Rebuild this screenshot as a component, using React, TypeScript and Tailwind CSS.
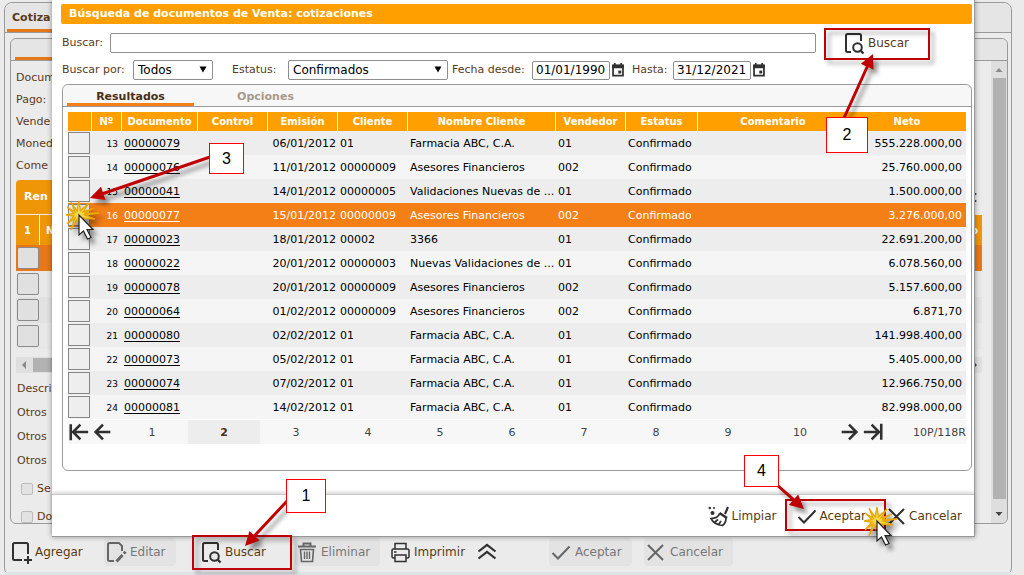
import type { ReactNode } from 'react'

type Row = {
  n: number
  doc: string
  date: string
  client: string
  name: string
  seller: string
  net: string
}

const rows: Row[] = [
  { n: 13, doc: '00000079', date: '06/01/2012', client: '01', name: 'Farmacia ABC, C.A.', seller: '01', net: '555.228.000,00' },
  { n: 14, doc: '00000076', date: '11/01/2012', client: '00000009', name: 'Asesores Financieros', seller: '002', net: '25.760.000,00' },
  { n: 15, doc: '00000041', date: '14/01/2012', client: '00000005', name: 'Validaciones Nuevas de ...', seller: '01', net: '1.500.000,00' },
  { n: 16, doc: '00000077', date: '15/01/2012', client: '00000009', name: 'Asesores Financieros', seller: '002', net: '3.276.000,00' },
  { n: 17, doc: '00000023', date: '18/01/2012', client: '00002', name: '3366', seller: '01', net: '22.691.200,00' },
  { n: 18, doc: '00000022', date: '20/01/2012', client: '00000003', name: 'Nuevas Validaciones de ...', seller: '01', net: '6.078.560,00' },
  { n: 19, doc: '00000078', date: '20/01/2012', client: '00000009', name: 'Asesores Financieros', seller: '002', net: '5.157.600,00' },
  { n: 20, doc: '00000064', date: '01/02/2012', client: '00000009', name: 'Asesores Financieros', seller: '002', net: '6.871,70' },
  { n: 21, doc: '00000080', date: '02/02/2012', client: '01', name: 'Farmacia ABC, C.A.', seller: '01', net: '141.998.400,00' },
  { n: 22, doc: '00000073', date: '05/02/2012', client: '01', name: 'Farmacia ABC, C.A.', seller: '01', net: '5.405.000,00' },
  { n: 23, doc: '00000074', date: '07/02/2012', client: '01', name: 'Farmacia ABC, C.A.', seller: '01', net: '12.966.750,00' },
  { n: 24, doc: '00000081', date: '14/02/2012', client: '01', name: 'Farmacia ABC, C.A.', seller: '01', net: '82.998.000,00' },
]

const SELECTED = 16

const columns = [
  { title: '', width: 'w-[24px]' },
  { title: 'Nº', width: 'w-[30px]' },
  { title: 'Documento', width: 'w-[76px]' },
  { title: 'Control', width: 'w-[70px]' },
  { title: 'Emisión', width: 'w-[70px]' },
  { title: 'Cliente', width: 'w-[70px]' },
  { title: 'Nombre Cliente', width: 'w-[148px]' },
  { title: 'Vendedor', width: 'w-[70px]' },
  { title: 'Estatus', width: 'w-[72px]' },
  { title: 'Comentario', width: 'w-[150px]' },
  { title: 'Neto', width: 'w-auto' },
]

const pages = [1, 2, 3, 4, 5, 6, 7, 8, 9, 10]

/* ---------- icons ---------- */

const Svg = ({ children, className = 'size-6' }: { children: ReactNode; className?: string }) => (
  <svg viewBox="0 0 24 24" className={`shrink-0 ${className}`} fill="none" stroke="currentColor" strokeWidth="2" aria-hidden="true">
    {children}
  </svg>
)

const AddIcon = () => (
  <Svg>
    <path d="M13 20H5.500Q4 20 4 18.500V4.500Q4 3 5.500 3H17.500Q19 3 19 4.500V14M19 16V24M15 20H23" />
  </Svg>
)

const EditIcon = () => (
  <Svg>
    <path d="M10 21H5.500Q4 21 4 19.500V4.500Q4 3 5.500 3H15L18 6V11" />
    <path d="M12.500 21.500L18.500 15" strokeWidth="3" />
    <path d="M19.800 13.500L21.500 11.800" strokeWidth="3" />
  </Svg>
)

const SearchDocIcon = () => (
  <Svg>
    <path d="M9 21H5.500Q4 21 4 19.500V4.500Q4 3 5.500 3H17.500Q19 3 19 4.500V10" />
    <circle cx="15.500" cy="16.500" r="4.300" />
    <path d="M18.500 19.500L21.500 22.500" strokeWidth="2.400" />
  </Svg>
)

const TrashIcon = () => (
  <Svg>
    <path d="M3 6.500H21M8.500 6V3.500H15.500V6" />
    <path d="M5.500 9.500L6.500 21.500H17.500L18.500 9.500Z" strokeWidth="1.600" />
    <path d="M9.500 11.500V19M12 11.500V19M14.500 11.500V19" strokeWidth="1.400" />
  </Svg>
)

const PrinterIcon = () => (
  <Svg>
    <path d="M7 8.500V3.500H18V8.500M7 18H5.500Q4 18 4 16.500V10.500Q4 9 5.500 9H19.500Q21 9 21 10.500V16.500Q21 18 19.500 18H18" strokeWidth="1.500" />
    <path d="M7 15H18V21.500H7ZM6 12H8.500" strokeWidth="1.500" />
  </Svg>
)

const ChevronsUpIcon = () => (
  <Svg>
    <path d="M3.500 11.500L12 5L20.500 11.500M3.500 18.500L12 12L20.500 18.500" strokeWidth="2.200" />
  </Svg>
)

const CheckIcon = () => (
  <Svg>
    <path d="M3.500 13L9 18.500L20.500 6.500" />
  </Svg>
)

const CloseIcon = () => (
  <Svg>
    <path d="M4 5L19 20M19 5L4 20" />
  </Svg>
)

const BroomIcon = () => (
  <Svg>
    <g fill="currentColor" stroke="none">
      <circle cx="1.800" cy="4" r="1.300" />
      <circle cx="6" cy="4" r="1" />
      <circle cx="4.500" cy="9" r="2" />
    </g>
    <path d="M20 3L17 10" strokeWidth="2.200" />
    <path d="M11.500 9L19 14" strokeWidth="2.600" />
    <path d="M11.500 9.500Q10 14.500 3 14.500Q6 20.500 14.500 21.500Q18 19 18 14M7 18L10 15.500M11 20L13 17" strokeWidth="1.700" />
  </Svg>
)

const CalendarIcon = () => (
  <Svg className="size-3.5">
    <path d="M3.500 4H20.500V21.500H3.500Z" strokeWidth="3" />
    <path d="M2 6H22" strokeWidth="6" />
    <path d="M6.500 0V5M17.500 0V5" strokeWidth="3" />
    <path d="M12.500 13H17.500V18H12.500Z" fill="currentColor" stroke="none" />
  </Svg>
)

const StepArrowIcon = () => (
  <Svg className="size-[22px]">
    <path d="M20 12H5M12 4L4 12L12 20" strokeWidth="2.800" />
  </Svg>
)

const EdgeArrowIcon = () => (
  <Svg className="size-[22px]">
    <path d="M3 3.500V21M22 12H6M13.500 4L5.500 12L13.500 20" strokeWidth="2.800" />
  </Svg>
)

/* ---------- background form ---------- */

const ToolButton = ({ icon, label, disabled }: { icon: ReactNode; label: string; disabled?: boolean }) => (
  <button
    type="button"
    disabled={disabled}
    className="flex h-7 items-center gap-0.5 rounded-sm pr-2.5 text-[#303030] disabled:bg-[#e3e3e3] disabled:text-[#666]"
  >
    {icon}
    <span className={disabled ? 'text-[#777]' : 'text-[#5a3a12]'}>{label}</span>
  </button>
)

const QuoteForm = () => (
  <div className="flex flex-col pl-[5px]">
    {['Docum', 'Pago:', 'Vende', 'Moned', 'Come'].map((label) => (
      <div key={label} className="flex h-[22px] items-center">
        {label}
      </div>
    ))}
    <div className="mt-[3px] flex h-[34px] items-center">
      <div className="flex h-full w-3/4 items-center rounded-t-sm bg-[#ee9607] pl-2 font-bold text-white">Ren</div>
      <div className="ml-auto flex flex-col text-[#333]">
        <svg viewBox="0 0 6 14" className="mr-1 h-3.5 w-1.5" aria-hidden="true">
          <path d="M0 1L5 4L0 7ZM0 8L5 11L0 14Z" fill="currentColor" />
        </svg>
      </div>
    </div>
    <div className="mt-px flex h-[30px] items-stretch bg-[#ee9607] text-[10px] font-bold text-white">
      <span className="flex w-6 items-center justify-center border-r border-white">1</span>
      <span className="flex flex-1 items-center pl-1.5">N</span>
      <span className="flex items-center pr-1">o</span>
    </div>
    {[0, 1, 2, 3].map((i) => (
      <div
        key={i}
        className={`flex h-[26px] items-center pl-px ${i === 0 ? 'bg-[#e6781a]' : i === 2 ? 'bg-[#e2e2e2]' : 'bg-[#e8e8e8]'}`}
      >
        <input
          type="checkbox"
          aria-label={`Renglón ${i + 1}`}
          className="size-[22px] appearance-none rounded-xs border border-[#8a8a8a] bg-[#e0e0e0]"
        />
      </div>
    ))}
    <div className="mt-2 flex h-4 items-center bg-[#dfdfdf]">
      <svg viewBox="0 0 17 16" className="h-4 w-[17px]" aria-hidden="true">
        <path d="M10 4V12L6 8Z" fill="#8a8a8a" />
      </svg>
      <span className="h-3.5 w-3/4 bg-[#b2b2b2]" />
      <svg viewBox="0 0 6 8" className="mr-1 ml-auto h-2 w-1.5" aria-hidden="true">
        <path d="M1 0V8L5 4Z" fill="#444" />
      </svg>
    </div>
    <div className="mt-1 flex flex-col pl-px">
      {['Descri', 'Otros', 'Otros', 'Otros'].map((label, i) => (
        <div key={i} className="flex h-6 items-center">
          {label}
        </div>
      ))}
      {['Se', 'Do'].map((label) => (
        <label key={label} className="mt-1 flex h-6 items-center gap-1 pl-1">
          <input type="checkbox" className="size-3 appearance-none rounded-xs border border-[#bdbdbd] bg-[#e2e2e2]" />
          {label}
        </label>
      ))}
    </div>
  </div>
)

const Background = () => (
  <div className="mt-0.5 mr-3 ml-1 flex flex-col rounded-lg border border-[#9a9a9a] bg-[#ebebeb]">
    <div className="flex h-[30px] items-stretch rounded-t-lg border-b border-[#9a9a9a] bg-[#e5e5e5] pl-0.5">
      <div className="flex w-32 items-center border-b-[3px] border-[#e6781a] pt-1 pl-[5px] font-bold">Cotiza</div>
    </div>

    <div className="mt-[5px] mr-[3px] ml-[5px] flex h-[486px] flex-col rounded-md border border-[#9a9a9a]">
      <div className="flex h-[22px] shrink-0 items-stretch rounded-t-md border-b border-[#9a9a9a] bg-[#e5e5e5] pl-1">
        <div className="w-32 border-b-[3px] border-[#e6781a]" />
      </div>
      <div className="flex min-h-0 flex-1">
        <div className="min-w-0 flex-1 pt-1.5 pr-[9px]">
          <QuoteForm />
        </div>
        <div className="flex w-4 flex-col items-center rounded-br-md bg-[#dedede]">
          <svg viewBox="0 0 16 17" className="h-[17px] w-4" aria-hidden="true">
            <path d="M4.500 11H11.500L8 7Z" fill="#8a8a8a" />
          </svg>
          <span className="w-[13px] flex-1 bg-[#b2b2b2]" />
          <svg viewBox="0 0 16 24" className="h-6 w-4" aria-hidden="true">
            <path d="M4.500 13H11.500L8 17Z" fill="#444" />
          </svg>
        </div>
      </div>
    </div>

    <div className="flex h-[42px] items-center pt-3.5 pb-0 pl-1 text-[12px]">
      <div className="flex w-[95px]">
        <ToolButton icon={<AddIcon />} label="Agregar" />
      </div>
      <div className="flex w-[95px]">
        <ToolButton icon={<EditIcon />} label="Editar" disabled />
      </div>
      <div className="flex w-[96px]">
        <ToolButton icon={<SearchDocIcon />} label="Buscar" />
      </div>
      <div className="flex w-[93px]">
        <ToolButton icon={<TrashIcon />} label="Eliminar" disabled />
      </div>
      <div className="flex w-[87px]">
        <ToolButton icon={<PrinterIcon />} label="Imprimir" />
      </div>
      <button type="button" aria-label="Más opciones" className="w-[74px] text-[#303030]">
        <ChevronsUpIcon />
      </button>
      <div className="flex w-[95px]">
        <ToolButton icon={<CheckIcon />} label="Aceptar" disabled />
      </div>
      <ToolButton icon={<CloseIcon />} label="Cancelar" disabled />
    </div>
    <div className="mt-1.5 h-[3px] rounded-b-lg bg-[#dfe3e8]" />
  </div>
)

/* ---------- search dialog ---------- */

const SelectBox = ({ id, value, className }: { id: string; value: string; className: string }) => (
  <div className={`relative ${className}`}>
    <select
      id={id}
      defaultValue={value}
      className="h-5 w-full appearance-none rounded-xs border border-[#8f8f8f] bg-white pl-1 text-[12px] text-black"
    >
      <option>{value}</option>
    </select>
    <svg viewBox="0 0 8 7" className="pointer-events-none absolute top-1.5 right-1.5 h-[7px] w-2" aria-hidden="true">
      <path d="M0.500 0.500H7.500L4 6.500Z" fill="#000" />
    </svg>
  </div>
)

const DateBox = ({ id, value }: { id: string; value: string }) => (
  <div className="flex items-center gap-px">
    <input
      id={id}
      type="text"
      defaultValue={value}
      className="h-[19px] w-[78px] rounded-xs border border-[#8f8f8f] bg-white pl-[3px] text-[12px] text-black"
    />
    <button type="button" aria-label="Calendario" className="text-[#303030]">
      <CalendarIcon />
    </button>
  </div>
)

const ResultsTable = () => (
  <table className="w-full table-fixed border-separate border-spacing-0 text-[11px] text-black">
    <colgroup>
      {columns.map((col, i) => (
        <col key={i} className={col.width} />
      ))}
    </colgroup>
    <thead>
      <tr className="h-[19px] bg-[#ffa000] text-[10px] text-white">
        {columns.map((col, i) => (
          <th key={i} className={`leading-[19px] font-bold ${i < 9 ? 'border-r border-white' : ''}`}>
            {col.title}
          </th>
        ))}
      </tr>
    </thead>
    <tbody>
      {rows.map((row) => (
        <tr
          key={row.n}
          className={`h-6 leading-4 *:not-first:pt-0.5 ${row.n === SELECTED ? 'bg-[#f57f17] text-white' : 'odd:bg-[#ededed] even:bg-[#f5f5f5]'}`}
        >
          <td>
            <input
              type="checkbox"
              aria-label={`Seleccionar ${row.doc}`}
              className="block size-[22px] appearance-none border border-[#858585] bg-[#eee]"
            />
          </td>
          <td className="pr-1 text-right text-[9px]">{row.n}</td>
          <td className="pl-0.5">
            <a href="#" className="underline underline-offset-2">
              {row.doc}
            </a>
          </td>
          <td />
          <td className="pr-0.5 text-right whitespace-nowrap">{row.date}</td>
          <td className="pl-0.5">{row.client}</td>
          <td className="pl-0.5 whitespace-nowrap">{row.name}</td>
          <td className="pl-0.5">{row.seller}</td>
          <td className="pl-0.5">Confirmado</td>
          <td />
          <td className="pr-1 text-right">{row.net}</td>
        </tr>
      ))}
    </tbody>
  </table>
)

const Pager = () => (
  <nav className="mt-px flex h-6 items-center bg-[#f7f7f7] text-[11px] text-[#444]">
    <div className="flex w-12 gap-0.5 text-[#303030]">
      <button type="button" aria-label="Primera página">
        <EdgeArrowIcon />
      </button>
      <button type="button" aria-label="Página anterior">
        <StepArrowIcon />
      </button>
    </div>
    {pages.map((page) => (
      <button
        key={page}
        type="button"
        className={`h-full flex-1 pt-0.5 ${page === 2 ? 'bg-[#ededed] font-bold text-[#4a2f14]' : ''}`}
      >
        {page}
      </button>
    ))}
    <div className="flex w-[130px] items-center gap-0.5 pl-0.5 text-[#303030]">
      <button type="button" aria-label="Página siguiente" className="rotate-180">
        <StepArrowIcon />
      </button>
      <button type="button" aria-label="Última página" className="rotate-180">
        <EdgeArrowIcon />
      </button>
      <span className="ml-auto pt-0.5 text-[#444]">10P/118R</span>
    </div>
  </nav>
)

const SearchDialog = () => (
  <section className="absolute top-0 right-[49px] left-[52px] border-r border-b border-[#9a9a9a] bg-white shadow-[0_0_5px_rgba(0,0,0,0.4)]">
    <div className="pt-1 pr-0.5 pb-[23px] pl-[9px]">
      <h1 className="h-5 rounded-xs bg-[#ffa000] pl-2 text-[11px] leading-5 font-bold text-white">
        Búsqueda de documentos de Venta: cotizaciones
      </h1>

      <div className="mt-[5px] flex h-7 items-center pl-px">
        <label htmlFor="q" className="w-12">
          Buscar:
        </label>
        <input id="q" type="text" className="h-5 min-w-0 flex-1 rounded-xs border border-[#8f8f8f] bg-white" />
        <button type="button" className="ml-[26px] flex w-[130px] items-center gap-0.5 text-[12px] text-[#303030]">
          <SearchDocIcon />
          <span className="text-[#5a3a12]">Buscar</span>
        </button>
      </div>

      <div className="mt-[3px] flex h-5 items-center pl-px">
        <label htmlFor="by" className="w-[71px]">
          Buscar por:
        </label>
        <SelectBox id="by" value="Todos" className="w-20" />
        <label htmlFor="status" className="ml-[19px] w-14">
          Estatus:
        </label>
        <SelectBox id="status" value="Confirmados" className="w-40" />
        <label htmlFor="from" className="ml-1 w-20 whitespace-nowrap">
          Fecha desde:
        </label>
        <DateBox id="from" value="01/01/1990" />
        <label htmlFor="to" className="ml-[7px] w-[41px] whitespace-nowrap">
          Hasta:
        </label>
        <DateBox id="to" value="31/12/2021" />
      </div>

      <div className="mt-1 ml-px rounded-md border border-[#9a9a9a] bg-white">
        <div className="flex h-[22px] items-stretch gap-2 rounded-t-md border-b border-[#9a9a9a] bg-[#f7f7f7] pl-1 text-[11px] font-bold">
          <button type="button" className="w-[127px] border-b-[3px] border-[#f57f17] pt-1 text-[#4a2f14]">
            Resultados
          </button>
          <button type="button" className="w-[127px] border-b-[3px] border-transparent pt-1 text-[#a89a8c]">
            Opciones
          </button>
        </div>
        <div className="px-[5px] pt-[5px] pb-[26px]">
          <ResultsTable />
          <Pager />
        </div>
      </div>
    </div>

    <footer className="border-t border-[#c8c8c8] shadow-[0_-2px_3px_rgba(0,0,0,0.15)]">
      <div className="flex h-[41px] items-center justify-end gap-[19px] pr-3 text-[12px] text-[#303030]">
        <button type="button" className="flex items-center">
          <BroomIcon />
          <span className="text-[#5a3a12]">Limpiar</span>
        </button>
        <button type="button" className="flex items-center">
          <CheckIcon />
          <span className="text-[#5a3a12]">Aceptar</span>
        </button>
        <button type="button" className="flex items-center">
          <CloseIcon />
          <span className="text-[#5a3a12]">Cancelar</span>
        </button>
      </div>
    </footer>
  </section>
)

/* ---------- tutorial annotations ---------- */

const StepBox = ({ n, className }: { n: number; className: string }) => (
  <div
    className={`absolute flex items-center justify-center border border-[#f00] bg-white font-['Liberation_Sans',sans-serif] text-[16px] text-black ${className}`}
  >
    {n}
  </div>
)

const Frame = ({ className }: { className: string }) => (
  <div className={`absolute border-2 border-[#c00000] drop-shadow-[4px_4px_2px_rgba(0,0,0,0.35)] ${className}`} />
)

const Arrow = ({ from, to }: { from: [number, number]; to: [number, number] }) => {
  const angle = (Math.atan2(to[1] - from[1], to[0] - from[0]) * 180) / Math.PI
  const length = Math.hypot(to[0] - from[0], to[1] - from[1])
  return (
    <g transform={`translate(${from[0]} ${from[1]}) rotate(${angle})`} fill="#c00000">
      <path d={`M0 -1.500H${length - 14}V-7L${length} 0L${length - 14} 7V1.500H0Z`} />
    </g>
  )
}

const Click = ({ x, y }: { x: number; y: number }) => (
  <g transform={`translate(${x} ${y})`}>
    <path
      d="M-8 -13L-2 -4L0 -14L1.500 -4L10 -12L4 -3L15 -7L5 -1.500L20 -2L6 0L16 4L4 3L8 9L1 4L-1 8L-2 4L-8 15L-4 3L-12 9L-5 1L-13 0L-5 -1.500L-12 -8L-4 -3Z"
      fill="#f3d84a"
      stroke="#e8a800"
      strokeWidth="1.300"
    />
    <path d="M0 0V20L4.500 16L8.500 24L12 22.500L8 14.500H14Z" fill="#fff" stroke="#222" strokeWidth="1.200" />
  </g>
)

const Annotations = () => (
  <div className="pointer-events-none absolute top-0 left-0">
    <Frame className="top-[535px] left-[192px] h-[35px] w-[100px]" />
    <Frame className="top-[28px] left-[824px] h-8 w-[106px]" />
    <Frame className="top-[499px] left-[785px] h-8 w-[101px]" />
    <svg
      viewBox="0 0 1024 575"
      className="absolute top-0 left-0 h-[575px] w-[1024px] max-w-none drop-shadow-[4px_5px_2px_rgba(0,0,0,0.4)]"
      aria-hidden="true"
    >
      <Arrow from={[288, 500]} to={[245, 546]} />
      <Arrow from={[844, 118]} to={[873, 54]} />
      <Arrow from={[210, 157]} to={[90, 198]} />
      <Arrow from={[777, 485]} to={[804, 509]} />
      <Click x={79} y={215} />
      <Click x={877} y={521} />
    </svg>
    <StepBox n={1} className="top-[479px] left-[286px] h-[34px] w-10" />
    <StepBox n={2} className="top-[117px] left-[826px] h-9 w-[42px]" />
    <StepBox n={3} className="top-[143px] left-[209px] h-[31px] w-[35px]" />
    <StepBox n={4} className="top-[455px] left-[744px] h-8 w-[35px]" />
  </div>
)

export default function App() {
  return (
    <main className="relative min-h-screen overflow-hidden bg-[#ebebeb] font-['DejaVu_Sans',sans-serif] text-[11px] text-[#5a3a1a]">
      <Background />
      <SearchDialog />
      <Annotations />
    </main>
  )
}
